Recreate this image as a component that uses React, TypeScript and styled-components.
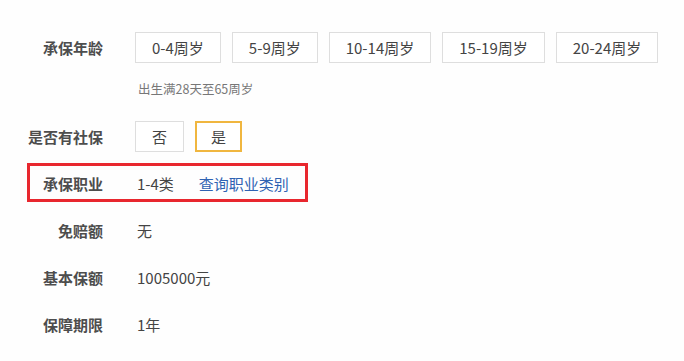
import React from "react";
import styled, { createGlobalStyle } from "styled-components";

const GlobalStyle = createGlobalStyle`
  html, body {
    margin: 0;
    padding: 0;
    background: #fefefe;
  }
  body {
    font-family: "Noto Sans CJK SC", "Noto Sans", "Liberation Sans", sans-serif;
  }
`;

const Page = styled.main`
  width: 684px;
  height: 361px;
  padding-top: 24px;
  box-sizing: border-box;
  overflow: hidden;
`;

const Row = styled.div<{ $top?: number; $highlight?: boolean }>`
  display: flex;
  align-items: center;
  height: 47px;
  margin-top: ${({ $top }) => $top ?? 0}px;
  position: relative;

  ${({ $highlight }) =>
    $highlight &&
    `
    &::before {
      content: "";
      position: absolute;
      left: 27px;
      top: 3px;
      width: 281px;
      height: 39px;
      border: 3px solid #e8272e;
      box-sizing: border-box;
      pointer-events: none;
    }
  `}
`;

const Label = styled.div`
  width: 103px;
  flex-shrink: 0;
  text-align: right;
  font-size: 15px;
  font-weight: 700;
  color: #4d4d4d;
  margin-right: 32px;
  white-space: nowrap;
`;

const Options = styled.div`
  display: flex;
  gap: 11px;
`;

const Option = styled.button<{ $active?: boolean }>`
  height: 31px;
  padding: 0 ${({ $active }) => ($active ? 14 : 16)}px;
  background: #fff;
  border: ${({ $active }) =>
    $active ? "2px solid #f0b63f" : "1px solid #dedede"};
  font-family: inherit;
  font-size: 15px;
  color: #444;
  cursor: pointer;
  white-space: nowrap;
`;

const Hint = styled.div`
  margin: 8px 0 0 138px;
  height: 20px;
  line-height: 20px;
  font-size: 12.5px;
  color: #777;
`;

const Value = styled.span`
  padding-left: 2px;
  font-size: 15px;
  color: #444;
`;

const QueryLink = styled.a`
  margin-left: 25px;
  font-size: 15px;
  color: #2f62b2;
  text-decoration: none;
`;

const ages = ["0-4周岁", "5-9周岁", "10-14周岁", "15-19周岁", "20-24周岁"];

const App = () => {
  return (
    <Page>
      <GlobalStyle />
      <Row>
        <Label>承保年龄</Label>
        <Options>
          {ages.map((age) => (
            <Option key={age}>{age}</Option>
          ))}
        </Options>
      </Row>
      <Hint>出生满28天至65周岁</Hint>
      <Row $top={14}>
        <Label>是否有社保</Label>
        <Options>
          <Option>否</Option>
          <Option $active>是</Option>
        </Options>
      </Row>
      <Row $highlight>
        <Label>承保职业</Label>
        <Value>1-4类</Value>
        <QueryLink href="#">查询职业类别</QueryLink>
      </Row>
      <Row>
        <Label>免赔额</Label>
        <Value>无</Value>
      </Row>
      <Row>
        <Label>基本保额</Label>
        <Value>1005000元</Value>
      </Row>
      <Row>
        <Label>保障期限</Label>
        <Value>1年</Value>
      </Row>
    </Page>
  );
};

export default App;
